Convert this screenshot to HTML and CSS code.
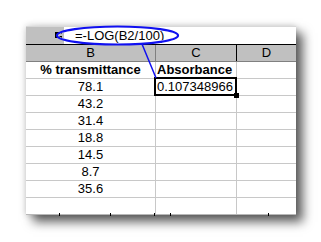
FILE: index.html
```html
<!DOCTYPE html>
<html>
<head>
<meta charset="utf-8">
<link rel="stylesheet" href="styles.css">
</head>
<body>
<div class="page">
  <div class="sheet">
    <div class="fbar">
      <div class="fbtn">
        <svg width="7" height="7" viewBox="0 0 7 7"><rect x="0" y="0" width="7" height="2" fill="#000"/><rect x="0" y="4" width="7" height="2" fill="#000"/><rect x="0" y="2" width="2" height="2" fill="#000"/></svg>
      </div>
      <div class="finput">=-LOG(B2/100)</div>
    </div>
    <div class="row head">
      <div class="cell">B</div>
      <div class="cell hc">C</div>
      <div class="cell last">D</div>
    </div>
    <div class="row">
      <div class="cell bold">% transmittance</div>
      <div class="cell bold left">Absorbance</div>
      <div class="cell last"></div>
    </div>
    <div class="row">
      <div class="cell">78.1</div>
      <div class="cell sel left">0.107348966</div>
      <div class="cell last"></div>
    </div>
    <div class="row"><div class="cell">43.2</div><div class="cell"></div><div class="cell last"></div></div>
    <div class="row"><div class="cell">31.4</div><div class="cell"></div><div class="cell last"></div></div>
    <div class="row"><div class="cell">18.8</div><div class="cell"></div><div class="cell last"></div></div>
    <div class="row"><div class="cell">14.5</div><div class="cell"></div><div class="cell last"></div></div>
    <div class="row"><div class="cell">8.7</div><div class="cell"></div><div class="cell last"></div></div>
    <div class="row"><div class="cell">35.6</div><div class="cell"></div><div class="cell last"></div></div>
    <div class="row lastrow"><div class="cell"></div><div class="cell"></div><div class="cell last"></div></div>
  </div>
  <svg class="annot" width="321" height="242" viewBox="0 0 321 242">
    <ellipse cx="117.5" cy="35.5" rx="59.5" ry="8" fill="none" stroke="#fff" stroke-width="1"/>
    <ellipse cx="117.5" cy="35.5" rx="60.5" ry="9" fill="none" stroke="#1010f0" stroke-width="2.2"/>
    <line x1="142" y1="44" x2="156" y2="78" stroke="#1010f0" stroke-width="1.5"/>
    <g fill="#000">
      <rect x="59" y="213" width="1" height="3"/>
      <rect x="110" y="213" width="1" height="3"/>
      <rect x="154" y="213" width="1" height="3"/>
      <rect x="170" y="213" width="1" height="3"/>
      <rect x="268" y="213" width="1" height="3"/>
    </g>
  </svg>
</div>
</body>
</html>
```

FILE: styles.css
```css
html, body {
  margin: 0;
  padding: 0;
  background: #fff;
}
body {
  width: 321px;
  height: 242px;
  overflow: hidden;
  font-family: "Liberation Sans", Arial, sans-serif;
  font-size: 13px;
  color: #000;
}
.page {
  position: relative;
  width: 321px;
  height: 242px;
  padding: 26px 0 0 26px;
  box-sizing: border-box;
}
.sheet {
  width: 270px;
  background: #fff;
  box-shadow: 7px 7px 10px rgba(0, 0, 0, 0.62), 0 0 7px rgba(0, 0, 0, 0.2);
  border-top: 1px solid #d8d8d8;
}
.fbar {
  display: flex;
  height: 17px;
  border-bottom: 1px solid #000;
}
.fbtn {
  width: 38px;
  background: #c0c0c0;
  display: flex;
  align-items: center;
  justify-content: flex-end;
  padding-right: 2px;
  box-sizing: border-box;
}
.finput {
  flex: 1;
  background: #fff;
  padding-left: 11px;
  line-height: 17px;
}
.row {
  display: grid;
  grid-template-columns: 130px 81px 59px;
  height: 17px;
  border-bottom: 1px solid #c8c8c8;
  box-sizing: border-box;
}
.row.lastrow {
  border-bottom: 1px solid #b8b8b8;
}
.cell {
  border-right: 1px solid #c8c8c8;
  text-align: center;
  line-height: 16px;
  white-space: nowrap;
  overflow: visible;
}
.cell.last {
  border-right: none;
}
.cell.left {
  text-align: left;
  padding-left: 1px;
}
.bold {
  font-weight: bold;
}
.head {
  background: #c0c0c0;
  border-bottom: 1px solid #808080;
}
.head .cell {
  border-right: 1px solid #808080;
}
.head .cell.hc {
  border-right: 1px solid #000;
}
.head .cell.last {
  border-right: none;
}
.sel {
  position: relative;
}
.sel::after {
  content: "";
  position: absolute;
  left: -2px;
  top: -2px;
  right: -1px;
  bottom: -1px;
  border: 2px solid #000;
}
.sel::before {
  content: "";
  position: absolute;
  right: -3px;
  bottom: -3px;
  width: 5px;
  height: 5px;
  background: #000;
  z-index: 2;
}
.annot {
  position: absolute;
  left: 0;
  top: 0;
  pointer-events: none;
}
```
